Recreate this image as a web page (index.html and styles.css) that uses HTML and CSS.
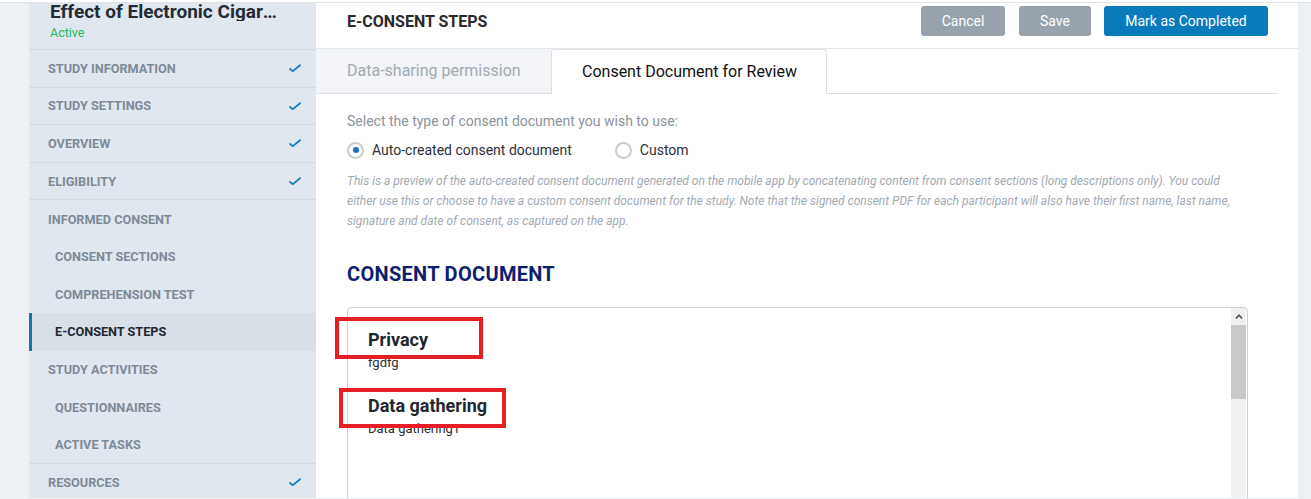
FILE: index.html
```html
<!DOCTYPE html>
<html>
<head>
<meta charset="utf-8">
<link rel="stylesheet" href="styles.css">
</head>
<body>
<div class="page">
  <div class="strip"></div>
  <aside class="sidebar">
    <div class="side-head">
      <div class="study-title">Effect of Electronic Cigarette Use on Health</div>
      <div class="study-status">Active</div>
    </div>
    <ul class="nav">
      <li class="nav-item bordered"><span>STUDY INFORMATION</span><svg class="check" viewBox="0 0 12 8"><path d="M1 5 L3.8 7.2 L11 1.2"/></svg></li>
      <li class="nav-item bordered"><span>STUDY SETTINGS</span><svg class="check" viewBox="0 0 12 8"><path d="M1 5 L3.8 7.2 L11 1.2"/></svg></li>
      <li class="nav-item bordered"><span>OVERVIEW</span><svg class="check" viewBox="0 0 12 8"><path d="M1 5 L3.8 7.2 L11 1.2"/></svg></li>
      <li class="nav-item bordered"><span>ELIGIBILITY</span><svg class="check" viewBox="0 0 12 8"><path d="M1 5 L3.8 7.2 L11 1.2"/></svg></li>
      <li class="nav-item"><span>INFORMED CONSENT</span></li>
      <li class="nav-item sub"><span>CONSENT SECTIONS</span></li>
      <li class="nav-item sub"><span>COMPREHENSION TEST</span></li>
      <li class="nav-item sub active"><span>E-CONSENT STEPS</span></li>
      <li class="nav-item"><span>STUDY ACTIVITIES</span></li>
      <li class="nav-item sub"><span>QUESTIONNAIRES</span></li>
      <li class="nav-item sub bordered"><span>ACTIVE TASKS</span></li>
      <li class="nav-item"><span>RESOURCES</span><svg class="check" viewBox="0 0 12 8"><path d="M1 5 L3.8 7.2 L11 1.2"/></svg></li>
    </ul>
  </aside>
  <main class="main">
    <header class="main-head">
      <h1 class="page-title">E-CONSENT STEPS</h1>
      <div class="actions">
        <button class="btn btn-gray btn-cancel">Cancel</button>
        <button class="btn btn-gray btn-save">Save</button>
        <button class="btn btn-blue">Mark as Completed</button>
      </div>
    </header>
    <div class="tabs">
      <div class="tab">Data-sharing permission</div>
      <div class="tab tab-active">Consent Document for Review</div>
      <div class="tab-fill"></div>
    </div>
    <section class="content">
      <p class="prompt">Select the type of consent document you wish to use:</p>
      <div class="radios">
        <label class="radio radio-first"><span class="dot checked"></span>Auto-created consent document</label>
        <label class="radio"><span class="dot"></span>Custom</label>
      </div>
      <p class="note">This is a preview of the auto-created consent document generated on the mobile app by concatenating content from consent sections (long descriptions only). You could either use this or choose to have a custom consent document for the study. Note that the signed consent PDF for each participant will also have their first name, last name, signature and date of consent, as captured on the app.</p>
      <h2 class="doc-title">CONSENT DOCUMENT</h2>
      <div class="doc-wrap">
        <div class="doc">
          <div class="doc-body">
            <h3 class="sec-title">Privacy</h3>
            <p class="sec-text">fgdfg</p>
            <h3 class="sec-title sec-gap">Data gathering</h3>
            <p class="sec-text">Data gathering1</p>
          </div>
          <div class="scrollbar">
            <div class="sb-arrow"><svg viewBox="0 0 8 5"><path d="M0.8 4.5 L4 1.2 L7.2 4.5"/></svg></div>
            <div class="sb-thumb"></div>
            <div class="sb-track"></div>
          </div>
        </div>
        <div class="mark mark-1"></div>
        <div class="mark mark-2"></div>
      </div>
    </section>
  </main>
  <div class="strip strip-right"></div>
</div>
</body>
</html>
```

FILE: styles.css
```css
* { box-sizing: border-box; }
html, body { margin: 0; padding: 0; }
body {
  font-family: Roboto, "Liberation Sans", Arial, sans-serif;
  background: #edf1f4;
  border-top: 2px solid #ffffff;
  height: 499px;
  overflow: hidden;
}
.page {
  display: flex;
  border-top: 1px solid #e2e5e8;
  height: 496px;
  overflow: hidden;
}
.strip { width: 29px; background: #edf1f4; flex: none; }
.strip-right { width: 13px; }

.sidebar {
  width: 287px;
  flex: none;
  background: #e1e7ee;
}
.side-head {
  height: 47px;
  padding: 0 20px 0 21px;
  border-bottom: 1px solid #d1d9e1;
}
.study-title {
  font-size: 19px;
  font-weight: 700;
  color: #232c36;
  line-height: 18px;
  white-space: nowrap;
  overflow: hidden;
  text-overflow: ellipsis;
  width: 230px;
}
.study-status {
  margin-top: 4px;
  font-size: 12.5px;
  line-height: 16px;
  color: #22bb62;
}
.nav { list-style: none; margin: 0; padding: 0; }
.nav-item {
  height: 37.6px;
  display: flex;
  align-items: center;
  justify-content: space-between;
  padding: 0 15px 0 19px;
  font-size: 12.7px;
  font-weight: 700;
  color: #7e8a97;
}
.nav-item.bordered { border-bottom: 1px solid #d1d9e1; }
.nav-item.sub { padding-left: 26px; }
.nav-item.active {
  background: #d8dfe7;
  color: #1f2833;
  box-shadow: inset 3px 0 0 #0a78b8;
}
.check {
  width: 12px;
  height: 8px;
  fill: none;
  stroke: #1b7ec3;
  stroke-width: 1.8;
  stroke-linecap: round;
}

.main {
  flex: 1;
  background: #ffffff;
  display: flex;
  flex-direction: column;
  min-width: 0;
}
.main-head {
  flex: none;
  height: 46px;
  border-bottom: 1px solid #e3e6ea;
  display: flex;
  align-items: flex-start;
  justify-content: space-between;
  padding: 0 30px 0 31px;
}
.page-title {
  margin: 10px 0 0;
  font-size: 16px;
  line-height: 18px;
  font-weight: 700;
  color: #2a2a2a;
}
.actions { display: flex; margin-top: 3px; }
.btn {
  height: 30px;
  border: 0;
  border-radius: 3px;
  color: #ffffff;
  font-family: inherit;
  font-size: 14px;
  padding: 0;
}
.btn-gray { background: #97a2ac; }
.btn-cancel { width: 84px; margin-right: 14px; }
.btn-save { width: 72px; margin-right: 13px; }
.btn-blue { background: #097bbd; width: 164px; }

.tabs {
  flex: none;
  display: flex;
  height: 45px;
  margin-right: 20px;
}
.tab {
  width: 235px;
  height: 45px;
  background: #f2f4f7;
  border-bottom: 1px solid #dde1e5;
  font-size: 16px;
  line-height: 44px;
  color: #a3aab2;
  padding-left: 31px;
}
.tab-active {
  width: 276px;
  background: #ffffff;
  color: #111111;
  border: 1px solid #dde1e5;
  border-bottom: 0;
  border-radius: 3px 3px 0 0;
  padding-left: 30px;
}
.tab-fill { flex: 1; border-bottom: 1px solid #dde1e5; }

.content { flex: none; padding: 17px 50px 0 31px; }
.prompt {
  margin: 0;
  font-size: 14px;
  line-height: 20px;
  color: #8b939b;
}
.radios {
  display: flex;
  margin-top: 9px;
  height: 20px;
  align-items: center;
}
.radio {
  display: flex;
  align-items: center;
  font-size: 14px;
  color: #2d3136;
}
.radio-first { margin-right: 43px; }
.dot {
  width: 17px;
  height: 17px;
  border-radius: 50%;
  border: 2px solid #c6ccd2;
  margin-right: 8px;
  position: relative;
  flex: none;
}
.dot.checked::after {
  content: "";
  position: absolute;
  left: 3.5px;
  top: 3.5px;
  width: 6px;
  height: 6px;
  border-radius: 50%;
  background: #1672c4;
}
.note {
  margin: 11px 0 0;
  font-size: 12px;
  line-height: 20px;
  font-style: italic;
  color: #a2aab3;
}
.doc-title {
  margin: 32px 0 0;
  font-size: 20px;
  line-height: 22px;
  font-weight: 700;
  letter-spacing: 0.3px;
  color: #0c1e70;
}
.doc-wrap {
  position: relative;
  margin-top: 22px;
}
.doc {
  border: 1px solid #c9d0d7;
  border-radius: 4px 4px 0 0;
  height: 220px;
  display: flex;
}
.doc-body {
  flex: 1;
  padding: 21px 20px 0 20px;
}
.sec-title {
  margin: 0;
  font-size: 18px;
  line-height: 22px;
  font-weight: 700;
  color: #22272d;
}
.sec-gap { margin-top: 24px; }
.sec-text {
  margin: 4px 0 0;
  font-size: 13px;
  line-height: 16px;
  color: #2b2f33;
}
.scrollbar {
  width: 15px;
  margin-right: 1px;
  display: flex;
  flex-direction: column;
  background: #f0f0f0;
}
.sb-arrow {
  height: 17px;
  display: flex;
  align-items: center;
  justify-content: center;
}
.sb-arrow svg {
  width: 8px;
  height: 5px;
  fill: none;
  stroke: #505050;
  stroke-width: 1.6;
}
.sb-thumb { height: 74px; background: #c9c9c9; }
.sb-track { flex: 1; }

.mark {
  position: absolute;
  border: 4px solid #e61f27;
}
.mark-1 { left: -12px; top: 10px; width: 148px; height: 42px; }
.mark-2 { left: -8px; top: 81px; width: 167px; height: 40px; }
```
